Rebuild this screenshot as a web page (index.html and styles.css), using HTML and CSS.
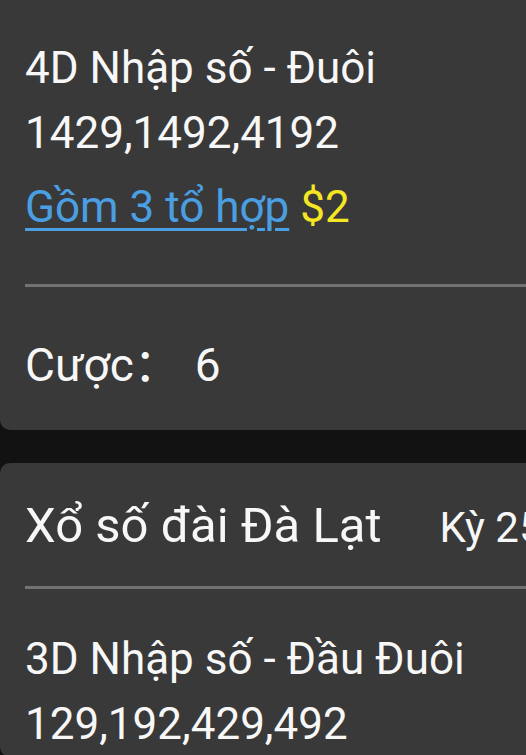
FILE: index.html
```html
<!DOCTYPE html>
<html lang="vi">
<head>
  <meta charset="UTF-8">
  <title>Lịch sử cược</title>
  <link rel="stylesheet" href="styles.css">
</head>
<body>
  <div class="bet-list">
    <div class="bet-card bet-card-first">
      <div class="bet-type">4D Nhập số - Đuôi</div>
      <div class="bet-numbers">1429,1492,4192</div>
      <div class="bet-combo"><a class="combo-link" href="#">Gồm 3 tổ hợp</a> <span class="combo-price">$2</span></div>
      <div class="divider"></div>
      <div class="bet-amount">Cược：<span class="amount-value">6</span></div>
    </div>
    <div class="bet-card">
      <div class="bet-header">
        <span class="bet-title">Xổ số đài Đà Lạt</span>
        <span class="bet-period">Kỳ 2506160</span>
      </div>
      <div class="divider divider-header"></div>
      <div class="bet-type">3D Nhập số - Đầu Đuôi</div>
      <div class="bet-numbers">129,192,429,492</div>
    </div>
  </div>
</body>
</html>
```

FILE: styles.css
```css
* { margin: 0; padding: 0; box-sizing: border-box; }
html, body {
  background: #121212;
  overflow: hidden;
}
body {
  font-family: Roboto, "Noto Sans CJK SC", sans-serif;
  font-size: 44px;
  line-height: 65px;
  color: #f7f7f7;
}
.bet-list {
  width: 640px;
  display: flex;
  flex-direction: column;
  gap: 33px;
}
.bet-card {
  background: #393939;
  border-radius: 10px;
  padding: 30px 0 0 25px;
  white-space: nowrap;
}
.bet-card-first {
  border-radius: 0 0 10px 10px;
  padding-top: 36px;
  padding-bottom: 32px;
}
.bet-combo {
  margin-top: 9px;
}
.combo-link {
  color: #4a9fe2;
  text-decoration: underline;
  text-decoration-thickness: 3px;
  text-underline-offset: 6px;
}
.combo-price {
  color: #f4e623;
}
.divider {
  height: 3px;
  background: #727272;
  margin: 44px 0 46px;
}
.divider-header {
  margin: 26px 0 38px;
}
.bet-amount {
  font-size: 46px;
}
.amount-value {
  margin-left: 15px;
}
.bet-header {
  display: flex;
  align-items: baseline;
  gap: 58px;
}
.bet-title {
  font-size: 49px;
}
.bet-period {
  font-size: 42px;
}
```
